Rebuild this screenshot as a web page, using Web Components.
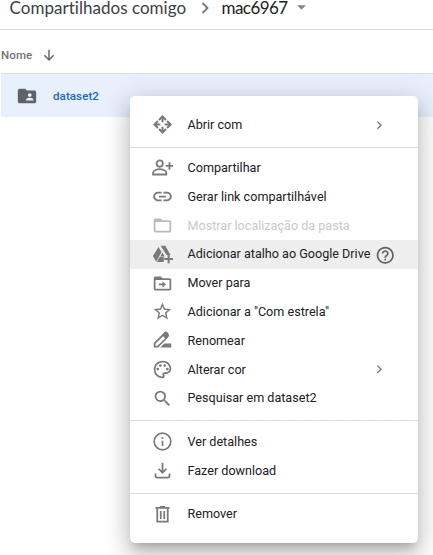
<!DOCTYPE html>
<html lang="pt-BR">
<head>
<meta charset="utf-8">
<title>Compartilhados comigo</title>
<style>
html,body{margin:0;height:100%;overflow:hidden;background:#fff}
body{font-family:Roboto,"Liberation Sans",sans-serif}
</style>
</head>
<body>
<drive-page></drive-page>
<script>
const ICONS = {
  open: '<g fill="none" stroke="currentColor" stroke-width="2.300"><path d="M8 6.800l4-4 4 4M8 17.200l4 4 4-4M6.800 8l-4 4 4 4M17.200 8l4 4-4 4"/><path d="M12 3v6.500M12 14.500V21M3 12h6.500M14.500 12H21"/></g>',
  share: '<g fill="none" stroke="currentColor" stroke-width="2.100"><circle cx="8.800" cy="7.500" r="3.600"/><path d="M1.300 20v-2.200c0-2.600 5-3.900 7.500-3.900s7.500 1.300 7.500 3.900V20zM20 6v8.500M15.700 10.200h8.300"/></g>',
  link: '<path fill="currentColor" d="M3.500 12c0-1.900 1.600-3.300 3.500-3.300h4V6.600H7c-3.100 0-5.600 2.400-5.600 5.400s2.500 5.400 5.600 5.400h4v-2.100H7c-1.900 0-3.500-1.400-3.500-3.300zM8 13h8v-2H8v2zm9-6.400h-4v2.100h4c1.900 0 3.500 1.400 3.500 3.300s-1.600 3.300-3.500 3.300h-4v2.100h4c3.100 0 5.600-2.400 5.600-5.400S20.100 6.600 17 6.600z"/>',
  folder: '<path fill="currentColor" d="M20 6h-8l-2-2H4c-1.100 0-2 .9-2 2v12c0 1.100.9 2 2 2h16c1.100 0 2-.9 2-2V8c0-1.100-.9-2-2-2zm0 12H4V8h16z"/>',
  shortcut: '<path fill="currentColor" d="M8.300 2h6.900l6 10.500h-4.600L9.800 2zM7.400 3.300l3.500 5.900-6.100 11L1 13.800zM8.700 14.800h4.800v5.700H5.600zM12 9.800l2.600 4.400H9.500zM17.800 12.200h2.400v3.700H24v2.400h-3.800V22h-2.400v-3.700H14v-2.400h3.800z"/>',
  move: '<path fill="currentColor" d="M20 6h-8l-2-2H4c-1.100 0-2 .9-2 2v12c0 1.100.9 2 2 2h16c1.100 0 2-.9 2-2V8c0-1.100-.9-2-2-2zm0 12H4V8h16zM12 9.300l4 3.700-4 3.700v-2.600H7.800v-2.200H12z"/>',
  star: '<path fill="currentColor" d="m22 9.240-7.190-.62L12 2 9.190 8.630 2 9.240l5.460 4.730L5.820 21 12 17.270 18.180 21l-1.630-7.030L22 9.240zM12 15.400l-3.760 2.270 1-4.280-3.320-2.880 4.380-.38L12 6.100l1.710 4.040 4.380.38-3.320 2.880 1 4.280L12 15.400z"/>',
  rename: '<path fill="currentColor" d="M18.300 3.400l-1-1c-.8-.8-2.050-.8-2.830 0L2 14.900V20h5.100L18.300 8.700c1.500-1.500 1.500-3.800 0-5.300zM6.220 18H4v-2.200L12.700 7 15 9.300zM14 15.500L9.500 20H22v-4.500z"/>',
  color: '<path fill="currentColor" d="M12 22C6.490 22 2 17.510 2 12S6.490 2 12 2s10 4.040 10 9c0 3.310-2.690 6-6 6h-1.770c-.28 0-.5.22-.5.500 0 .12.050.23.130.33.410.47.640 1.060.640 1.670A2.500 2.500 0 0 1 12 22zm0-18c-4.410 0-8 3.590-8 8s3.590 8 8 8c.28 0 .5-.22.5-.5a.54.54 0 0 0-.14-.35c-.41-.46-.63-1.050-.63-1.650a2.500 2.500 0 0 1 2.500-2.500H16c2.210 0 4-1.790 4-4 0-3.860-3.590-7-8-7z"/><g fill="currentColor"><circle cx="6.500" cy="11.500" r="1.500"/><circle cx="9.500" cy="7.500" r="1.500"/><circle cx="14.500" cy="7.500" r="1.500"/><circle cx="17.500" cy="11.500" r="1.500"/></g>',
  search: '<path fill="currentColor" d="M15.500 14h-.79l-.28-.27A6.471 6.471 0 0 0 16 9.500 6.500 6.500 0 1 0 9.500 16c1.610 0 3.090-.59 4.230-1.570l.27.28v.79l5 4.990L20.490 19l-4.990-5zm-6 0C7.010 14 5 11.990 5 9.500S7.010 5 9.500 5 14 7.010 14 9.500 11.990 14 9.500 14z"/>',
  info: '<g fill="none" stroke="currentColor" stroke-width="1.900"><circle cx="12" cy="12" r="9.500"/><path d="M12 11v6M12 7v2"/></g>',
  download: '<path fill="none" stroke="currentColor" stroke-width="2" d="M12 3v11M7.500 10l4.500 4.500 4.500-4.500M4 15.500V18q0 2 2 2h12q2 0 2-2v-2.500"/>',
  trash: '<path fill="none" stroke="currentColor" stroke-width="2" d="M4 4.500h16M9 3.300h6M6 5v15h12V5M10 8v9M14 8v9"/>',
  help: '<path fill="currentColor" d="M11 18h2v-2h-2v2zm1-16C6.480 2 2 6.480 2 12s4.480 10 10 10 10-4.480 10-10S17.520 2 12 2zm0 18c-4.410 0-8-3.590-8-8s3.590-8 8-8 8 3.590 8 8-3.590 8-8 8zm0-14c-2.210 0-4 1.790-4 4h2c0-1.100.9-2 2-2s2 .9 2 2c0 2-3 1.750-3 5h2c0-2.250 3-2.500 3-5 0-2.210-1.790-4-4-4z"/>',
  chevron: '<path fill="none" stroke="currentColor" stroke-width="2.200" d="M9 6l6 6-6 6"/>',
  down: '<path fill="none" stroke="currentColor" stroke-width="2.400" d="M12 3v17M4 12.500l8 8 8-8"/>',
  caret: '<path fill="currentColor" d="M4 8h16l-8 8z"/>',
  shared: '<path fill="currentColor" d="M20 6h-8l-2-2H4c-1.100 0-2 .9-2 2v12c0 1.100.9 2 2 2h16c1.100 0 2-.9 2-2V8c0-1.100-.9-2-2-2zm-5 3c1.100 0 2 .9 2 2s-.9 2-2 2-2-.9-2-2 .9-2 2-2zm4 8h-8v-1c0-1.330 2.670-2 4-2s4 .67 4 2v1z"/>'
};

class DriveIcon extends HTMLElement {
  connectedCallback() {
    this.attachShadow({mode:'open'}).innerHTML = `<style>
      :host{display:block;flex:none;width:var(--size,21px);height:var(--size,21px)}
      svg{display:block;width:100%;height:100%}
    </style><svg viewBox="0 0 24 24">${ICONS[this.getAttribute('name')]}</svg>`;
  }
}
customElements.define('drive-icon', DriveIcon);

class MenuItem extends HTMLElement {
  connectedCallback() {
    this.attachShadow({mode:'open'}).innerHTML = `<style>
      :host{display:flex;align-items:center;box-sizing:border-box;height:28.800px;padding-left:22px;color:#202124}
      :host([active]){background:#eee}
      :host([disabled]){color:#c9c9c9}
      drive-icon{color:#7a7a7a}
      :host([disabled]) .lead{color:#bababa}
      span{margin-left:14.500px;white-space:nowrap;line-height:16px;font-size:12.600px}
      .arrow{--size:14.400px;margin:0 31.500px 0 auto;color:#757575}
      .help{--size:20.500px;margin:2px 0 0 5px;color:#5f6368}
    </style>
    <drive-icon class="lead" name="${this.getAttribute('icon')}"></drive-icon><span><slot></slot></span>
    ${this.hasAttribute('submenu') ? '<drive-icon class="arrow" name="chevron"></drive-icon>' : ''}
    ${this.hasAttribute('help') ? '<drive-icon class="help" name="help"></drive-icon>' : ''}`;
  }
}
customElements.define('menu-item', MenuItem);

class MenuDivider extends HTMLElement {
  connectedCallback() {
    this.attachShadow({mode:'open'}).innerHTML = `<style>
      :host{display:block;height:1px;margin:7.400px 0 6.400px;background:#dadce0}
      :host(:first-of-type){margin-bottom:6px}
    </style>`;
  }
}
customElements.define('menu-divider', MenuDivider);

class ContextMenu extends HTMLElement {
  connectedCallback() {
    this.attachShadow({mode:'open'}).innerHTML = `<style>
      :host{display:block;box-sizing:border-box;width:288px;height:447px;padding-top:14.400px;background:#fff;border-radius:5px;
        box-shadow:0 7px 9px -4px rgba(0,0,0,.2),0 13px 22px 2px rgba(0,0,0,.14),0 5px 27px 4px rgba(0,0,0,.12)}
    </style><slot></slot>`;
  }
}
customElements.define('context-menu', ContextMenu);

class BreadCrumb extends HTMLElement {
  connectedCallback() {
    this.attachShadow({mode:'open'}).innerHTML = `<style>
      :host{display:flex;align-items:center;box-sizing:border-box;height:30px;padding:0 0 14px 9.500px;border-bottom:1px solid #dadce0;
        font:17px/15px Lato,"Open Sans",sans-serif;color:#3c4043;white-space:nowrap}
      .parent{width:177px;letter-spacing:.03px;color:#3c4043}
      .current{width:67px;color:#202124;letter-spacing:-.55px}
      .sep{--size:20px;margin:1px 7px 0 8px;color:#757575}
      .caret{--size:13px;margin-left:6px;color:#80868b}
    </style><span class="parent">Compartilhados comigo</span><drive-icon class="sep" name="chevron"></drive-icon><span class="current">mac6967</span><drive-icon class="caret" name="caret"></drive-icon>`;
  }
}
customElements.define('bread-crumb', BreadCrumb);

class FileList extends HTMLElement {
  connectedCallback() {
    this.attachShadow({mode:'open'}).innerHTML = `<style>
      :host{display:block;padding-left:1px;font-size:11.500px;line-height:16px}
      header{display:flex;align-items:center;height:43px;border-bottom:1px solid #dadce0;font-weight:500;color:#757575}
      header span{width:41px;padding-top:7px;letter-spacing:.1px}
      header drive-icon{--size:14px;margin-top:7px;color:#5f6368}
      .row{display:flex;align-items:center;height:43px;padding-left:15px;background:#e8f0fe;color:#1967d2;font-weight:500}
      .row drive-icon{--size:22px;color:#5f6368}
      .row span{margin-left:15px;letter-spacing:.1px}
    </style><header><span>Nome</span><drive-icon name="down"></drive-icon></header>
    <div class="row"><drive-icon name="shared"></drive-icon><span>dataset2</span></div>`;
  }
}
customElements.define('file-list', FileList);

class DrivePage extends HTMLElement {
  connectedCallback() {
    this.attachShadow({mode:'open'}).innerHTML = `<style>
      :host{display:block;position:relative;width:433px;height:555px;overflow:hidden;background:#fff}
      context-menu{position:absolute;left:130px;top:96px}
    </style>
    <bread-crumb></bread-crumb>
    <file-list></file-list>
    <context-menu>
      <menu-item icon="open" submenu>Abrir com</menu-item>
      <menu-divider></menu-divider>
      <menu-item icon="share">Compartilhar</menu-item>
      <menu-item icon="link">Gerar link compartilhável</menu-item>
      <menu-item icon="folder" disabled>Mostrar localização da pasta</menu-item>
      <menu-item icon="shortcut" active help>Adicionar atalho ao Google Drive</menu-item>
      <menu-item icon="move">Mover para</menu-item>
      <menu-item icon="star">Adicionar a "Com estrela"</menu-item>
      <menu-item icon="rename">Renomear</menu-item>
      <menu-item icon="color" submenu>Alterar cor</menu-item>
      <menu-item icon="search">Pesquisar em dataset2</menu-item>
      <menu-divider></menu-divider>
      <menu-item icon="info">Ver detalhes</menu-item>
      <menu-item icon="download">Fazer download</menu-item>
      <menu-divider></menu-divider>
      <menu-item icon="trash">Remover</menu-item>
    </context-menu>`;
  }
}
customElements.define('drive-page', DrivePage);
</script>
</body>
</html>
